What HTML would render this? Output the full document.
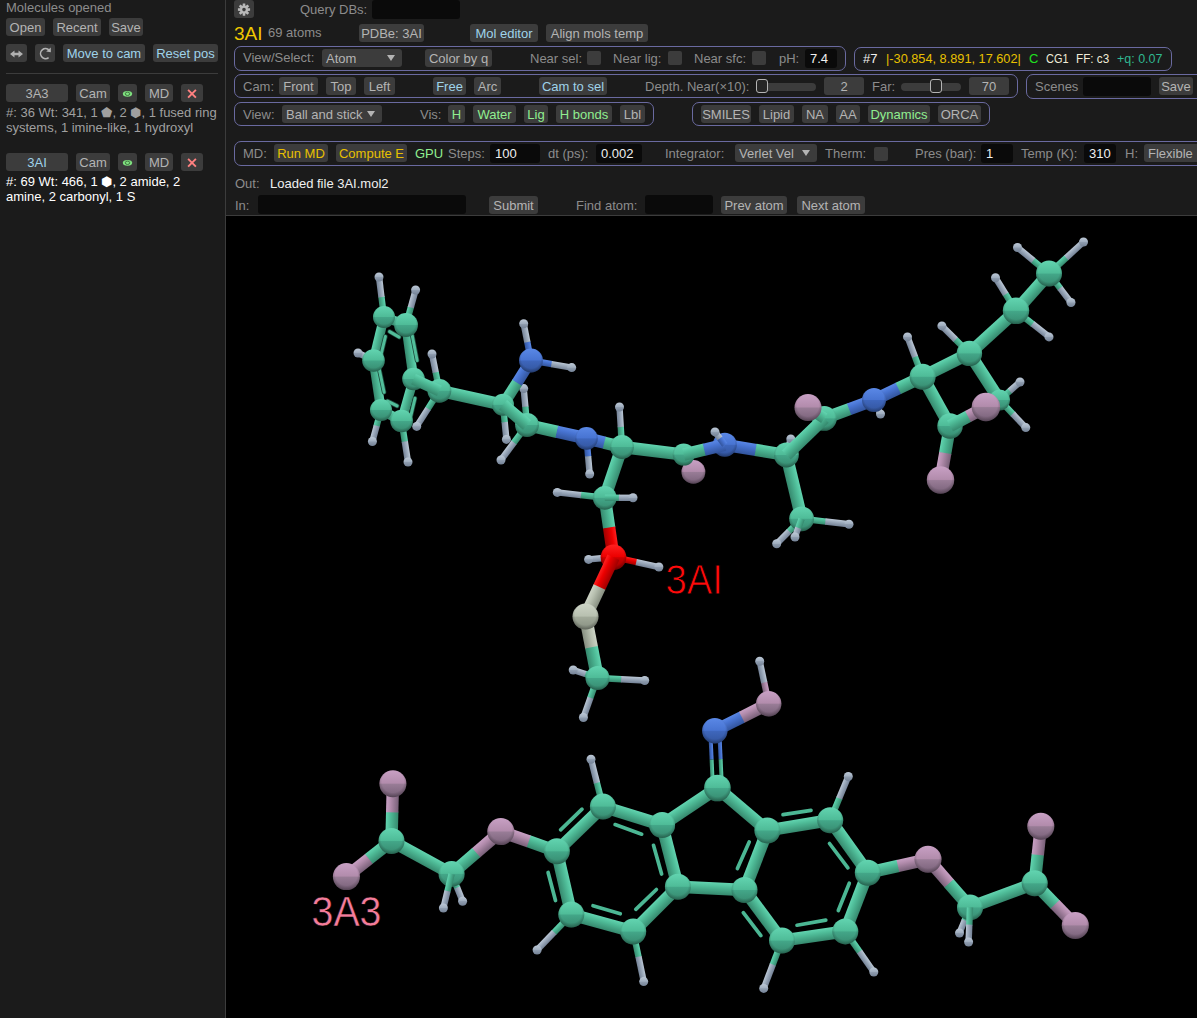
<!DOCTYPE html>
<html><head><meta charset="utf-8">
<style>
*{margin:0;padding:0;box-sizing:border-box}
html,body{width:1197px;height:1018px;overflow:hidden;background:#1b1b1b;font-family:"Liberation Sans",sans-serif;font-size:13px}
.t{position:absolute;white-space:nowrap;line-height:18px;height:18px;color:#8c8c8c;margin-top:1px}
.b{position:absolute;white-space:nowrap;background:#3c3c3c;border-radius:3px;height:18px;line-height:18px;text-align:center;color:#b4b4b4;padding-top:1px}
.inp{position:absolute;background:#0a0a0a;border-radius:3px;height:19px;line-height:19px;color:#f0f0f0;padding-left:5px}
.g{position:absolute;border:1px solid #6a6aa0;border-radius:7px}
.cb{position:absolute;width:14px;height:14px;background:#3c3c3c;border-radius:2px}
.lb{color:#9fd3ea}
.gr{color:#90ee90}
.yl{color:#e8c000}
#view{position:absolute;left:226px;top:216px;width:971px;height:802px;background:#000;overflow:hidden}
#vline{position:absolute;left:225px;top:0;width:1px;height:1018px;background:#3c3c3c}
#hline{position:absolute;left:226px;top:215px;width:971px;height:1px;background:#3c3c3c}
.tri{position:absolute;width:0;height:0;border-left:4.5px solid transparent;border-right:4.5px solid transparent;border-top:6px solid #b4b4b4}
.trk{position:absolute;height:8px;background:#3c3c3c;border-radius:4px}
.hdl{position:absolute;width:12px;height:14px;background:#262626;border:1.5px solid #b4b4b4;border-radius:3px}
</style></head><body>
<!-- LEFT PANEL -->
<div class="t" style="left:6px;top:-2px">Molecules opened</div>
<div class="b" style="left:6px;top:18px;width:39px">Open</div>
<div class="b" style="left:53px;top:18px;width:48px">Recent</div>
<div class="b" style="left:109px;top:18px;width:34px">Save</div>
<div class="b" style="left:6px;top:44px;width:21px"><svg width="21" height="18" style="position:absolute;left:0;top:0"><path d="M4 10 L8.5 6.5 L8.5 8.7 L12.5 8.7 L12.5 6.5 L17 10 L12.5 13.5 L12.5 11.3 L8.5 11.3 L8.5 13.5 Z" fill="#b0b0b0"/></svg></div>
<div class="b" style="left:35px;top:44px;width:20px"><svg width="20" height="18" style="position:absolute;left:0;top:0"><path d="M13.6 13.6 A5 5 0 1 1 14.2 6.2" fill="none" stroke="#b4b4b4" stroke-width="1.6"/><path d="M11.2 7.4 L15.8 3.6 L15.8 8.2 Z" fill="#b4b4b4"/></svg></div>
<div class="b lb" style="left:63px;top:44px;width:82px">Move to cam</div>
<div class="b lb" style="left:153px;top:44px;width:65px">Reset pos</div>
<div style="position:absolute;left:6px;top:73px;width:212px;height:1px;background:#3c3c3c"></div>

<div class="b" style="left:6px;top:84px;width:62px">3A3</div>
<div class="b" style="left:76px;top:84px;width:34px">Cam</div>
<div class="b" style="left:118px;top:84px;width:19px"><svg width="19" height="18" style="position:absolute;left:0;top:0"><ellipse cx="9.5" cy="9.8" rx="4.7" ry="2.9" fill="#7ee07e"/><ellipse cx="9.5" cy="9.8" rx="2.2" ry="1.7" fill="none" stroke="#3c6a3c" stroke-width="0.9"/></svg></div>
<div class="b" style="left:145px;top:84px;width:28px">MD</div>
<div class="b" style="left:181px;top:84px;width:22px"><svg width="22" height="18" style="position:absolute;left:0;top:0"><path d="M7.1 5.9 L14.9 13.7 M14.9 5.9 L7.1 13.7" stroke="#ff8080" stroke-width="1.9"/></svg></div>
<div class="t" style="left:6px;top:103px;color:#a0a0a0">#: 36 Wt: 341, 1 ⬟, 2 ⬢, 1 fused ring</div>
<div class="t" style="left:6px;top:118px;color:#a0a0a0">systems, 1 imine-like, 1 hydroxyl</div>

<div class="b lb" style="left:6px;top:153px;width:62px">3AI</div>
<div class="b" style="left:76px;top:153px;width:34px">Cam</div>
<div class="b" style="left:118px;top:153px;width:19px"><svg width="19" height="18" style="position:absolute;left:0;top:0"><ellipse cx="9.5" cy="9.8" rx="4.7" ry="2.9" fill="#7ee07e"/><ellipse cx="9.5" cy="9.8" rx="2.2" ry="1.7" fill="none" stroke="#3c6a3c" stroke-width="0.9"/></svg></div>
<div class="b" style="left:145px;top:153px;width:28px">MD</div>
<div class="b" style="left:181px;top:153px;width:22px"><svg width="22" height="18" style="position:absolute;left:0;top:0"><path d="M7.1 5.9 L14.9 13.7 M14.9 5.9 L7.1 13.7" stroke="#ff8080" stroke-width="1.9"/></svg></div>
<div class="t" style="left:6px;top:172px;color:#fff">#: 69 Wt: 466, 1 ⬢, 2 amide, 2</div>
<div class="t" style="left:6px;top:187px;color:#fff">amine, 2 carbonyl, 1 S</div>

<div id="vline"></div>
<div id="hline"></div>

<!-- TOP PANEL -->
<div class="b" style="left:234px;top:0;width:20px"><svg width="20" height="18" style="position:absolute;left:0;top:0"><g transform="translate(10 9.6) rotate(-90)"><path d="M6.08 -1.23 L6.08 1.23 L3.74 1.41 L3.64 1.65 L5.17 3.43 L3.43 5.17 L1.65 3.64 L1.41 3.74 L1.23 6.08 L-1.23 6.08 L-1.41 3.74 L-1.65 3.64 L-3.43 5.17 L-5.17 3.43 L-3.64 1.65 L-3.74 1.41 L-6.08 1.23 L-6.08 -1.23 L-3.74 -1.41 L-3.64 -1.65 L-5.17 -3.43 L-3.43 -5.17 L-1.65 -3.64 L-1.41 -3.74 L-1.23 -6.08 L1.23 -6.08 L1.41 -3.74 L1.65 -3.64 L3.43 -5.17 L5.17 -3.43 L3.64 -1.65 L3.74 -1.41Z M1.8 0 A1.8 1.8 0 1 0 -1.8 0 A1.8 1.8 0 1 0 1.8 0Z" fill="#b8b8b8" fill-rule="evenodd"/></g></svg></div>
<div class="t" style="left:300px;top:-0.5px">Query DBs:</div>
<div class="inp" style="left:372px;top:0;width:88px"></div>
<div class="t" style="left:234px;top:24px;font-size:19px;color:#f0c800">3AI</div>
<div class="t" style="left:268px;top:23px">69 atoms</div>
<div class="b" style="left:359px;top:24px;width:65px">PDBe: 3AI</div>
<div class="b lb" style="left:470px;top:24px;width:68px">Mol editor</div>
<div class="b" style="left:546px;top:24px;width:102px">Align mols temp</div>


<!-- ROW 1 -->
<div class="g" style="left:234px;top:46px;width:612px;height:25px"></div>
<div class="t" style="left:243px;top:48px">View/Select:</div>
<div class="b" style="left:322px;top:49px;width:80px;text-align:left;padding-left:4px">Atom<span class="tri" style="left:64.5px;top:6px"></span></div>
<div class="b" style="left:425px;top:49px;width:67px">Color by q</div>
<div class="t" style="left:530px;top:49px">Near sel:</div>
<div class="cb" style="left:587px;top:51px"></div>
<div class="t" style="left:613px;top:49px">Near lig:</div>
<div class="cb" style="left:668px;top:51px"></div>
<div class="t" style="left:694px;top:49px">Near sfc:</div>
<div class="cb" style="left:752px;top:51px"></div>
<div class="t" style="left:779px;top:49px">pH:</div>
<div class="inp" style="left:805px;top:49px;width:32px">7.4</div>

<div class="g" style="left:854px;top:47px;width:318px;height:24px"></div>
<div class="t" style="left:863px;top:49px;color:#f0f0f0">#7</div>
<div class="t yl" style="left:886px;top:49px;transform:scaleX(0.98);transform-origin:0 0">|-30.854, 8.891, 17.602|</div>
<div class="t" style="left:1029px;top:49px;color:#20e020">C</div>
<div class="t" style="left:1045.5px;top:49px;color:#f0ecd8;transform:scaleX(0.84);transform-origin:0 0">CG1</div>
<div class="t" style="left:1076px;top:49px;color:#f0ecd8;transform:scaleX(0.9);transform-origin:0 0">FF: c3</div>
<div class="t" style="left:1116.5px;top:49px;color:#30b890;transform:scaleX(0.96);transform-origin:0 0">+q: 0.07</div>

<!-- ROW 2 -->
<div class="g" style="left:234px;top:74px;width:784px;height:24px"></div>
<div class="t" style="left:243px;top:77px">Cam:</div>
<div class="b" style="left:279px;top:77px;width:39px">Front</div>
<div class="b" style="left:326px;top:77px;width:30px">Top</div>
<div class="b" style="left:364px;top:77px;width:31px">Left</div>
<div class="b lb" style="left:433px;top:77px;width:33px">Free</div>
<div class="b" style="left:474px;top:77px;width:27px">Arc</div>
<div class="b lb" style="left:539px;top:77px;width:68px">Cam to sel</div>
<div class="t" style="left:645px;top:77px">Depth. Near(×10):</div>
<div class="trk" style="left:756px;top:83px;width:60px"></div>
<div class="hdl" style="left:755.5px;top:79px"></div>
<div class="b" style="left:824px;top:77px;width:40px">2</div>
<div class="t" style="left:872px;top:77px">Far:</div>
<div class="trk" style="left:901px;top:83px;width:60px"></div>
<div class="hdl" style="left:929.5px;top:79px"></div>
<div class="b" style="left:969px;top:77px;width:40px">70</div>

<div class="g" style="left:1026px;top:74px;width:200px;height:25px"></div>
<div class="t" style="left:1035px;top:77px">Scenes</div>
<div class="inp" style="left:1083px;top:77px;width:68px"></div>
<div class="b" style="left:1159px;top:77px;width:34px">Save</div>

<!-- ROW 3 -->
<div class="g" style="left:234px;top:102px;width:420px;height:24px"></div>
<div class="t" style="left:243px;top:105px">View:</div>
<div class="b" style="left:282px;top:105px;width:100px;text-align:left;padding-left:4px">Ball and stick<span class="tri" style="left:85px;top:6px"></span></div>
<div class="t" style="left:420px;top:105px">Vis:</div>
<div class="b gr" style="left:448px;top:105px;width:17px">H</div>
<div class="b gr" style="left:473px;top:105px;width:43px">Water</div>
<div class="b gr" style="left:524px;top:105px;width:24px">Lig</div>
<div class="b gr" style="left:556px;top:105px;width:56px">H bonds</div>
<div class="b" style="left:620px;top:105px;width:25px">Lbl</div>

<div class="g" style="left:692px;top:102px;width:298px;height:24px"></div>
<div class="b" style="left:701px;top:105px;width:50px">SMILES</div>
<div class="b" style="left:759px;top:105px;width:35px">Lipid</div>
<div class="b" style="left:802px;top:105px;width:26px">NA</div>
<div class="b" style="left:836px;top:105px;width:24px">AA</div>
<div class="b gr" style="left:868px;top:105px;width:62px">Dynamics</div>
<div class="b" style="left:938px;top:105px;width:43px">ORCA</div>

<!-- MD ROW -->
<div class="g" style="left:234px;top:141px;width:990px;height:25px"></div>
<div class="t" style="left:243px;top:144px">MD:</div>
<div class="b yl" style="left:274px;top:144px;width:54px">Run MD</div>
<div class="b yl" style="left:336px;top:144px;width:71px">Compute E</div>
<div class="t gr" style="left:415px;top:144px">GPU</div>
<div class="t" style="left:448px;top:144px">Steps:</div>
<div class="inp" style="left:490px;top:144px;width:50px">100</div>
<div class="t" style="left:548px;top:144px">dt (ps):</div>
<div class="inp" style="left:596px;top:144px;width:46px">0.002</div>
<div class="t" style="left:665px;top:144px">Integrator:</div>
<div class="b" style="left:735px;top:144px;width:82px;text-align:left;padding-left:4px">Verlet Vel<span class="tri" style="left:66.5px;top:6px"></span></div>
<div class="t" style="left:825px;top:144px">Therm:</div>
<div class="cb" style="left:874px;top:147px"></div>
<div class="t" style="left:915px;top:144px">Pres (bar):</div>
<div class="inp" style="left:981px;top:144px;width:32px">1</div>
<div class="t" style="left:1021px;top:144px">Temp (K):</div>
<div class="inp" style="left:1084px;top:144px;width:32px">310</div>
<div class="t" style="left:1125px;top:144px">H:</div>
<div class="b" style="left:1144px;top:144px;width:60px;text-align:left;padding-left:4px">Flexible</div>

<!-- OUT / IN -->
<div class="t" style="left:235px;top:174px">Out:</div>
<div class="t" style="left:270px;top:174px;color:#f0f0f0">Loaded file 3AI.mol2</div>
<div class="t" style="left:235px;top:196px">In:</div>
<div class="inp" style="left:258px;top:195px;width:208px"></div>
<div class="b" style="left:489px;top:196px;width:49px">Submit</div>
<div class="t" style="left:576px;top:196px">Find atom:</div>
<div class="inp" style="left:645px;top:195px;width:68px"></div>
<div class="b" style="left:721px;top:196px;width:66px">Prev atom</div>
<div class="b" style="left:797px;top:196px;width:68px">Next atom</div>

<div id="view"><svg width="971" height="802" viewBox="0 0 971 802"><defs><linearGradient id="sC" x1="0" y1="0" x2="0" y2="1"><stop offset="0" stop-color="#62d4b0"/><stop offset="0.48" stop-color="#4fbc98"/><stop offset="0.52" stop-color="#43a688"/><stop offset="1" stop-color="#36896e"/></linearGradient><linearGradient id="kC" x1="0" y1="0" x2="0" y2="1"><stop offset="0" stop-color="#62d4b0"/><stop offset="0.35" stop-color="#4fbc98"/><stop offset="1" stop-color="#36896e"/></linearGradient><linearGradient id="sN" x1="0" y1="0" x2="0" y2="1"><stop offset="0" stop-color="#5a88e6"/><stop offset="0.48" stop-color="#4874d2"/><stop offset="0.52" stop-color="#3e66bc"/><stop offset="1" stop-color="#32549c"/></linearGradient><linearGradient id="kN" x1="0" y1="0" x2="0" y2="1"><stop offset="0" stop-color="#5a88e6"/><stop offset="0.35" stop-color="#4874d2"/><stop offset="1" stop-color="#32549c"/></linearGradient><linearGradient id="sP" x1="0" y1="0" x2="0" y2="1"><stop offset="0" stop-color="#c8a0c4"/><stop offset="0.48" stop-color="#b28cac"/><stop offset="0.52" stop-color="#987c96"/><stop offset="1" stop-color="#786078"/></linearGradient><linearGradient id="kP" x1="0" y1="0" x2="0" y2="1"><stop offset="0" stop-color="#c8a0c4"/><stop offset="0.35" stop-color="#b28cac"/><stop offset="1" stop-color="#786078"/></linearGradient><linearGradient id="sR" x1="0" y1="0" x2="0" y2="1"><stop offset="0" stop-color="#ff2020"/><stop offset="0.48" stop-color="#ec0000"/><stop offset="0.52" stop-color="#cc0000"/><stop offset="1" stop-color="#a00000"/></linearGradient><linearGradient id="kR" x1="0" y1="0" x2="0" y2="1"><stop offset="0" stop-color="#ff2020"/><stop offset="0.35" stop-color="#ec0000"/><stop offset="1" stop-color="#a00000"/></linearGradient><linearGradient id="sS" x1="0" y1="0" x2="0" y2="1"><stop offset="0" stop-color="#cdd4c6"/><stop offset="0.48" stop-color="#b8c0b0"/><stop offset="0.52" stop-color="#a2aa9a"/><stop offset="1" stop-color="#868e80"/></linearGradient><linearGradient id="kS" x1="0" y1="0" x2="0" y2="1"><stop offset="0" stop-color="#cdd4c6"/><stop offset="0.35" stop-color="#b8c0b0"/><stop offset="1" stop-color="#868e80"/></linearGradient><linearGradient id="sH" x1="0" y1="0" x2="0" y2="1"><stop offset="0" stop-color="#bcc8d6"/><stop offset="0.48" stop-color="#a0aebf"/><stop offset="0.52" stop-color="#909eb0"/><stop offset="1" stop-color="#748296"/></linearGradient><linearGradient id="kH" x1="0" y1="0" x2="0" y2="1"><stop offset="0" stop-color="#bcc8d6"/><stop offset="0.35" stop-color="#a0aebf"/><stop offset="1" stop-color="#748296"/></linearGradient><radialGradient id="rim" cx="0.5" cy="0.42" r="0.58"><stop offset="0.7" stop-color="#000" stop-opacity="0"/><stop offset="1" stop-color="#000" stop-opacity="0.3"/></radialGradient></defs><rect transform="translate(560.4 239) rotate(-74.7)" x="0" y="-3.2" width="8.9" height="6.4" fill="url(#kC)"/><rect transform="translate(562.6 230.9) rotate(-74.7)" x="0" y="-3.2" width="8.3" height="6.4" fill="url(#kH)"/><circle cx="564.8" cy="222.9" r="4.5" fill="url(#sH)"/><rect transform="translate(139.2 140.5) rotate(25.8)" x="0" y="-3.2" width="9.2" height="6.4" fill="url(#kC)"/><rect transform="translate(132 137) rotate(25.8)" x="0" y="-3.2" width="8.6" height="6.4" fill="url(#kH)"/><rect transform="translate(277 188.8) rotate(84.4)" x="0" y="-3.2" width="18" height="6.4" fill="url(#kC)"/><rect transform="translate(278.7 206.1) rotate(84.4)" x="0" y="-3.2" width="17.4" height="6.4" fill="url(#kH)"/><rect transform="translate(360.5 222.4) rotate(84.9)" x="0" y="-3.2" width="18.5" height="6.4" fill="url(#kN)"/><rect transform="translate(362.1 240.2) rotate(84.9)" x="0" y="-3.2" width="17.9" height="6.4" fill="url(#kH)"/><rect transform="translate(374.5 342.4) rotate(-5)" x="0" y="-3.2" width="13.1" height="6.4" fill="url(#kR)"/><rect transform="translate(362.6 343.4) rotate(-5)" x="0" y="-3.2" width="12.5" height="6.4" fill="url(#kH)"/><rect transform="translate(358.8 457.8) rotate(18.2)" x="0" y="-3.2" width="13.4" height="6.4" fill="url(#kC)"/><rect transform="translate(347.2 454) rotate(18.2)" x="0" y="-3.2" width="12.8" height="6.4" fill="url(#kH)"/><rect transform="translate(648 184) rotate(65.1)" x="0" y="-3.2" width="8.3" height="6.4" fill="url(#kN)"/><rect transform="translate(651.2 191) rotate(65.1)" x="0" y="-3.2" width="7.7" height="6.4" fill="url(#kH)"/><rect transform="translate(562.7 315.7) rotate(-45)" x="0" y="-3.2" width="18.2" height="6.4" fill="url(#kC)"/><rect transform="translate(550.7 327.7) rotate(-45)" x="0" y="-3.2" width="17.6" height="6.4" fill="url(#kH)"/><rect transform="translate(225.6 657.9) rotate(68.1)" x="0" y="-3.2" width="15.3" height="6.4" fill="url(#kC)"/><rect transform="translate(231.1 671.5) rotate(68.1)" x="0" y="-3.2" width="14.7" height="6.4" fill="url(#kH)"/><rect transform="translate(738.5 704.8) rotate(-67.7)" x="0" y="-3.2" width="14.4" height="6.4" fill="url(#kC)"/><rect transform="translate(733.5 717) rotate(-67.7)" x="0" y="-3.2" width="13.8" height="6.4" fill="url(#kH)"/><circle cx="132" cy="137" r="4.5" fill="url(#sH)"/><circle cx="280.4" cy="223.4" r="4.5" fill="url(#sH)"/><circle cx="363.7" cy="258" r="4.5" fill="url(#sH)"/><circle cx="362.6" cy="343.4" r="4.5" fill="url(#sH)"/><circle cx="347.2" cy="454" r="4.5" fill="url(#sH)"/><circle cx="654.5" cy="198" r="4.5" fill="url(#sH)"/><circle cx="550.7" cy="327.7" r="4.5" fill="url(#sH)"/><circle cx="236.6" cy="685.2" r="4.5" fill="url(#sH)"/><circle cx="733.5" cy="717" r="4.5" fill="url(#sH)"/><rect transform="translate(457.7 238.6) rotate(60.7)" x="0" y="-5.6" width="10.5" height="11.3" fill="url(#kC)"/><rect transform="translate(462.6 247.2) rotate(60.7)" x="0" y="-5.6" width="9.9" height="11.3" fill="url(#kP)"/><rect transform="translate(773.6 184) rotate(-41.4)" x="0" y="-3.2" width="14.2" height="6.4" fill="url(#kC)"/><rect transform="translate(783.8 175) rotate(-41.4)" x="0" y="-3.2" width="13.6" height="6.4" fill="url(#kH)"/><rect transform="translate(773.6 184) rotate(46.5)" x="0" y="-3.2" width="19.6" height="6.4" fill="url(#kC)"/><rect transform="translate(786.7 197.8) rotate(46.5)" x="0" y="-3.2" width="19" height="6.4" fill="url(#kH)"/><circle cx="467.4" cy="255.9" r="11.9" fill="url(#sP)"/><circle cx="467.4" cy="255.9" r="11.9" fill="url(#rim)"/><circle cx="794" cy="166" r="4.5" fill="url(#sH)"/><circle cx="799.8" cy="211.6" r="4.5" fill="url(#sH)"/><rect transform="translate(155.4 80.4) rotate(82.9)" x="0" y="-3.2" width="20.8" height="6.4" fill="url(#kC)"/><rect transform="translate(153 61) rotate(82.9)" x="0" y="-3.2" width="20.2" height="6.4" fill="url(#kH)"/><rect transform="translate(180 109) rotate(-74.7)" x="0" y="-3.2" width="18.7" height="6.4" fill="url(#kC)"/><rect transform="translate(184.8 91.5) rotate(-74.7)" x="0" y="-3.2" width="18.1" height="6.4" fill="url(#kH)"/><rect transform="translate(150.5 210.3) rotate(-74.7)" x="0" y="-3.2" width="16.9" height="6.4" fill="url(#kC)"/><rect transform="translate(146.4 225.5) rotate(-74.7)" x="0" y="-3.2" width="16.3" height="6.4" fill="url(#kH)"/><rect transform="translate(175.6 205) rotate(81.1)" x="0" y="-3.2" width="21.3" height="6.4" fill="url(#kC)"/><rect transform="translate(178.8 225.5) rotate(81.1)" x="0" y="-3.2" width="20.7" height="6.4" fill="url(#kH)"/><rect transform="translate(209.6 155.8) rotate(78.6)" x="0" y="-3.2" width="19.4" height="6.4" fill="url(#kC)"/><rect transform="translate(206 138) rotate(78.6)" x="0" y="-3.2" width="18.8" height="6.4" fill="url(#kH)"/><rect transform="translate(201.7 193.1) rotate(-57.5)" x="0" y="-3.2" width="21.7" height="6.4" fill="url(#kC)"/><rect transform="translate(190.7 210.4) rotate(-57.5)" x="0" y="-3.2" width="21.1" height="6.4" fill="url(#kH)"/><rect transform="translate(301.2 125.6) rotate(78.8)" x="0" y="-3.2" width="19.3" height="6.4" fill="url(#kN)"/><rect transform="translate(297.7 107.8) rotate(78.8)" x="0" y="-3.2" width="18.7" height="6.4" fill="url(#kH)"/><rect transform="translate(305 144.5) rotate(9.9)" x="0" y="-3.2" width="21.3" height="6.4" fill="url(#kN)"/><rect transform="translate(325.4 148.1) rotate(9.9)" x="0" y="-3.2" width="20.7" height="6.4" fill="url(#kH)"/><rect transform="translate(299.3 190.2) rotate(84.8)" x="0" y="-3.2" width="18.9" height="6.4" fill="url(#kC)"/><rect transform="translate(297.7 172.6) rotate(84.8)" x="0" y="-3.2" width="18.3" height="6.4" fill="url(#kH)"/><rect transform="translate(287.6 227) rotate(-53.4)" x="0" y="-3.2" width="22.4" height="6.4" fill="url(#kC)"/><rect transform="translate(275 244) rotate(-53.4)" x="0" y="-3.2" width="21.8" height="6.4" fill="url(#kH)"/><rect transform="translate(394.7 210.4) rotate(86.4)" x="0" y="-3.2" width="20.6" height="6.4" fill="url(#kC)"/><rect transform="translate(393.5 191) rotate(86.4)" x="0" y="-3.2" width="20" height="6.4" fill="url(#kH)"/><rect transform="translate(354.5 279) rotate(6.5)" x="0" y="-3.2" width="24.5" height="6.4" fill="url(#kC)"/><rect transform="translate(331.3 276.4) rotate(6.5)" x="0" y="-3.2" width="23.9" height="6.4" fill="url(#kH)"/><rect transform="translate(387.5 341.2) rotate(12.2)" x="0" y="-3.2" width="23.8" height="6.4" fill="url(#kR)"/><rect transform="translate(410.2 346.1) rotate(12.2)" x="0" y="-3.2" width="23.2" height="6.4" fill="url(#kH)"/><rect transform="translate(371.5 462) rotate(3)" x="0" y="-3.2" width="24.2" height="6.4" fill="url(#kC)"/><rect transform="translate(395.1 463.2) rotate(3)" x="0" y="-3.2" width="23.6" height="6.4" fill="url(#kH)"/><rect transform="translate(364.2 482.3) rotate(-70.4)" x="0" y="-3.2" width="21.6" height="6.4" fill="url(#kC)"/><rect transform="translate(357.4 501.5) rotate(-70.4)" x="0" y="-3.2" width="21" height="6.4" fill="url(#kH)"/><rect transform="translate(688.8 140.3) rotate(69.3)" x="0" y="-3.2" width="21.9" height="6.4" fill="url(#kC)"/><rect transform="translate(681.5 120.9) rotate(69.3)" x="0" y="-3.2" width="21.3" height="6.4" fill="url(#kH)"/><rect transform="translate(729.2 123.2) rotate(45)" x="0" y="-3.2" width="20" height="6.4" fill="url(#kC)"/><rect transform="translate(715.9 109.9) rotate(45)" x="0" y="-3.2" width="19.4" height="6.4" fill="url(#kH)"/><rect transform="translate(743.4 137.4) rotate(57.1)" x="0" y="-6.2" width="55.5" height="12.4" fill="url(#kC)"/><rect transform="translate(779.4 77.8) rotate(58.2)" x="0" y="-3.2" width="20" height="6.4" fill="url(#kC)"/><rect transform="translate(769.5 61.8) rotate(58.2)" x="0" y="-3.2" width="19.4" height="6.4" fill="url(#kH)"/><rect transform="translate(790 94.8) rotate(38.3)" x="0" y="-3.2" width="21.6" height="6.4" fill="url(#kC)"/><rect transform="translate(806.5 107.8) rotate(38.3)" x="0" y="-3.2" width="21" height="6.4" fill="url(#kH)"/><rect transform="translate(806.8 44.2) rotate(39.6)" x="0" y="-3.2" width="21.1" height="6.4" fill="url(#kC)"/><rect transform="translate(791.5 31.5) rotate(39.6)" x="0" y="-3.2" width="20.5" height="6.4" fill="url(#kH)"/><rect transform="translate(823 57.6) rotate(-42.5)" x="0" y="-3.2" width="24" height="6.4" fill="url(#kC)"/><rect transform="translate(840.2 41.8) rotate(-42.5)" x="0" y="-3.2" width="23.4" height="6.4" fill="url(#kH)"/><rect transform="translate(823 57.6) rotate(52.7)" x="0" y="-3.2" width="18.8" height="6.4" fill="url(#kC)"/><rect transform="translate(834 72.1) rotate(52.7)" x="0" y="-3.2" width="18.2" height="6.4" fill="url(#kH)"/><rect transform="translate(575.6 302.8) rotate(6.6)" x="0" y="-3.2" width="24.5" height="6.4" fill="url(#kC)"/><rect transform="translate(599.3 305.5) rotate(6.6)" x="0" y="-3.2" width="23.9" height="6.4" fill="url(#kH)"/><rect transform="translate(538.1 465.9) rotate(78)" x="0" y="-3.2" width="22.3" height="6.4" fill="url(#kP)"/><rect transform="translate(533.7 445.3) rotate(78)" x="0" y="-3.2" width="21.7" height="6.4" fill="url(#kH)"/><rect transform="translate(370.8 566.3) rotate(75.9)" x="0" y="-3.2" width="25" height="6.4" fill="url(#kC)"/><rect transform="translate(365 543.2) rotate(75.9)" x="0" y="-3.2" width="24.4" height="6.4" fill="url(#kH)"/><rect transform="translate(327.8 716.7) rotate(-46.1)" x="0" y="-3.2" width="25.2" height="6.4" fill="url(#kC)"/><rect transform="translate(311.1 734) rotate(-46.1)" x="0" y="-3.2" width="24.6" height="6.4" fill="url(#kH)"/><rect transform="translate(407.2 715.6) rotate(78.1)" x="0" y="-3.2" width="26.1" height="6.4" fill="url(#kC)"/><rect transform="translate(412.5 740.6) rotate(78.1)" x="0" y="-3.2" width="25.5" height="6.4" fill="url(#kH)"/><rect transform="translate(546.6 749.1) rotate(-69.1)" x="0" y="-3.2" width="26.2" height="6.4" fill="url(#kC)"/><rect transform="translate(537.7 772.4) rotate(-69.1)" x="0" y="-3.2" width="25.6" height="6.4" fill="url(#kH)"/><rect transform="translate(619.3 715.4) rotate(54.9)" x="0" y="-3.2" width="25.4" height="6.4" fill="url(#kC)"/><rect transform="translate(633.5 735.7) rotate(54.9)" x="0" y="-3.2" width="24.8" height="6.4" fill="url(#kH)"/><rect transform="translate(604.2 604.2) rotate(-67.5)" x="0" y="-3.2" width="24.3" height="6.4" fill="url(#kC)"/><rect transform="translate(613.2 582.4) rotate(-67.5)" x="0" y="-3.2" width="23.7" height="6.4" fill="url(#kH)"/><circle cx="153" cy="61" r="4.5" fill="url(#sH)"/><circle cx="189.6" cy="74" r="4.5" fill="url(#sH)"/><circle cx="146.4" cy="225.5" r="4.5" fill="url(#sH)"/><circle cx="182" cy="246" r="4.5" fill="url(#sH)"/><circle cx="206" cy="138" r="4.5" fill="url(#sH)"/><circle cx="190.7" cy="210.4" r="4.5" fill="url(#sH)"/><circle cx="297.7" cy="107.8" r="4.5" fill="url(#sH)"/><circle cx="345.7" cy="151.6" r="4.5" fill="url(#sH)"/><circle cx="297.7" cy="172.6" r="4.5" fill="url(#sH)"/><circle cx="275" cy="244" r="4.5" fill="url(#sH)"/><circle cx="393.5" cy="191" r="4.5" fill="url(#sH)"/><circle cx="331.3" cy="276.4" r="4.5" fill="url(#sH)"/><circle cx="432.9" cy="351" r="4.5" fill="url(#sH)"/><circle cx="418.7" cy="464.5" r="4.5" fill="url(#sH)"/><circle cx="357.4" cy="501.5" r="4.5" fill="url(#sH)"/><circle cx="681.5" cy="120.9" r="4.5" fill="url(#sH)"/><circle cx="715.9" cy="109.9" r="4.5" fill="url(#sH)"/><circle cx="773.6" cy="184" r="10.5" fill="url(#sC)"/><circle cx="773.6" cy="184" r="10.5" fill="url(#rim)"/><circle cx="769.5" cy="61.8" r="4.5" fill="url(#sH)"/><circle cx="823" cy="120.9" r="4.5" fill="url(#sH)"/><circle cx="791.5" cy="31.5" r="4.5" fill="url(#sH)"/><circle cx="857.5" cy="26" r="4.5" fill="url(#sH)"/><circle cx="845" cy="86.5" r="4.5" fill="url(#sH)"/><circle cx="623" cy="308.3" r="4.5" fill="url(#sH)"/><circle cx="533.7" cy="445.3" r="4.5" fill="url(#sH)"/><circle cx="365" cy="543.2" r="4.5" fill="url(#sH)"/><circle cx="311.1" cy="734" r="4.5" fill="url(#sH)"/><circle cx="417.7" cy="765.6" r="4.5" fill="url(#sH)"/><circle cx="537.7" cy="772.4" r="4.5" fill="url(#sH)"/><circle cx="647.8" cy="756" r="4.5" fill="url(#sH)"/><circle cx="622.3" cy="560.5" r="4.5" fill="url(#sH)"/><rect transform="translate(158 101) rotate(20)" x="0" y="-4.8" width="23.4" height="9.6" fill="url(#kC)"/><rect transform="translate(147.5 144.5) rotate(-76.4)" x="0" y="-4.8" width="44.7" height="9.6" fill="url(#kC)"/><rect transform="translate(180 109) rotate(82.1)" x="0" y="-4.8" width="54.5" height="9.6" fill="url(#kC)"/><rect transform="translate(147.5 144.5) rotate(81.4)" x="0" y="-4.8" width="50.1" height="9.6" fill="url(#kC)"/><rect transform="translate(175.6 205) rotate(-74.2)" x="0" y="-4.8" width="43.7" height="9.6" fill="url(#kC)"/><rect transform="translate(155 194) rotate(28.1)" x="0" y="-4.8" width="23.4" height="9.6" fill="url(#kC)"/><rect transform="translate(213.4 174.8) rotate(12.4)" x="0" y="-6.2" width="65.1" height="12.4" fill="url(#kC)"/><rect transform="translate(277 188.8) rotate(-57.7)" x="0" y="-5.6" width="26.8" height="11.3" fill="url(#kC)"/><rect transform="translate(291 166.7) rotate(-57.7)" x="0" y="-5.6" width="26.2" height="11.3" fill="url(#kN)"/><rect transform="translate(301 209) rotate(12.7)" x="0" y="-6.2" width="31.1" height="12.4" fill="url(#kC)"/><rect transform="translate(330.8 215.7) rotate(12.7)" x="0" y="-6.2" width="30.5" height="12.4" fill="url(#kN)"/><rect transform="translate(360.5 222.4) rotate(13.6)" x="0" y="-6.2" width="18.9" height="12.4" fill="url(#kN)"/><rect transform="translate(378.2 226.7) rotate(13.6)" x="0" y="-6.2" width="18.3" height="12.4" fill="url(#kC)"/><rect transform="translate(396 231) rotate(7)" x="0" y="-6.2" width="62.2" height="12.4" fill="url(#kC)"/><rect transform="translate(378.8 281.8) rotate(-71.3)" x="0" y="-6.2" width="53.6" height="12.4" fill="url(#kC)"/><rect transform="translate(378.8 281.8) rotate(81.7)" x="0" y="-6.2" width="30.6" height="12.4" fill="url(#kC)"/><rect transform="translate(383.1 311.5) rotate(81.7)" x="0" y="-6.2" width="30" height="12.4" fill="url(#kR)"/><rect transform="translate(359.5 400.6) rotate(78.9)" x="0" y="-6.5" width="31.9" height="13" fill="url(#kS)"/><rect transform="translate(365.5 431.3) rotate(78.9)" x="0" y="-6.5" width="31.3" height="13" fill="url(#kC)"/><rect transform="translate(498.8 228.8) rotate(9.4)" x="0" y="-6.2" width="31.8" height="12.4" fill="url(#kN)"/><rect transform="translate(529.6 233.9) rotate(9.4)" x="0" y="-6.2" width="31.2" height="12.4" fill="url(#kC)"/><rect transform="translate(598.3 202.4) rotate(-20.3)" x="0" y="-6.2" width="27.1" height="12.4" fill="url(#kC)"/><rect transform="translate(623.1 193.2) rotate(-20.3)" x="0" y="-6.2" width="26.5" height="12.4" fill="url(#kN)"/><rect transform="translate(648 184) rotate(-25.5)" x="0" y="-6.2" width="27.5" height="12.4" fill="url(#kN)"/><rect transform="translate(672.3 172.4) rotate(-25.5)" x="0" y="-6.2" width="26.9" height="12.4" fill="url(#kC)"/><rect transform="translate(696.6 160.8) rotate(-26.6)" x="0" y="-6.2" width="52.3" height="12.4" fill="url(#kC)"/><rect transform="translate(696.6 160.8) rotate(60.9)" x="0" y="-6.2" width="56.3" height="12.4" fill="url(#kC)"/><rect transform="translate(719.1 237.6) rotate(-80)" x="0" y="-6.2" width="28" height="12.4" fill="url(#kC)"/><rect transform="translate(714.5 264) rotate(-80)" x="0" y="-6.2" width="27.4" height="12.4" fill="url(#kP)"/><rect transform="translate(743.4 137.4) rotate(-42.4)" x="0" y="-6.2" width="63.1" height="12.4" fill="url(#kC)"/><rect transform="translate(790 94.8) rotate(-48.4)" x="0" y="-6.2" width="49.7" height="12.4" fill="url(#kC)"/><rect transform="translate(560.4 239) rotate(76.6)" x="0" y="-6.2" width="65.6" height="12.4" fill="url(#kC)"/><rect transform="translate(488.8 514.8) rotate(-26.7)" x="0" y="-6.2" width="30.8" height="12.4" fill="url(#kN)"/><rect transform="translate(515.8 501.2) rotate(-26.7)" x="0" y="-6.2" width="30.2" height="12.4" fill="url(#kP)"/><rect transform="translate(493.3 514.6) rotate(87.4)" x="0" y="-2" width="28.6" height="4" fill="url(#kN)"/><rect transform="translate(494.6 543.2) rotate(87.4)" x="0" y="-2" width="28.6" height="4" fill="url(#kC)"/><rect transform="translate(484.3 515) rotate(87.4)" x="0" y="-2" width="28.6" height="4" fill="url(#kN)"/><rect transform="translate(485.6 543.6) rotate(87.4)" x="0" y="-2" width="28.6" height="4" fill="url(#kC)"/><rect transform="translate(436.1 609) rotate(-33.8)" x="0" y="-6.2" width="66.5" height="12.4" fill="url(#kC)"/><rect transform="translate(376.9 590.6) rotate(17.3)" x="0" y="-6.2" width="62" height="12.4" fill="url(#kC)"/><rect transform="translate(330.8 635.3) rotate(-44.1)" x="0" y="-6.2" width="64.2" height="12.4" fill="url(#kC)"/><rect transform="translate(330.8 635.3) rotate(77.1)" x="0" y="-6.2" width="64.8" height="12.4" fill="url(#kC)"/><rect transform="translate(345.3 698.5) rotate(15.4)" x="0" y="-6.2" width="64.2" height="12.4" fill="url(#kC)"/><rect transform="translate(407.2 715.6) rotate(-45.1)" x="0" y="-6.2" width="63.3" height="12.4" fill="url(#kC)"/><rect transform="translate(436.1 609) rotate(75.7)" x="0" y="-6.2" width="63.8" height="12.4" fill="url(#kC)"/><rect transform="translate(491.4 572) rotate(40.4)" x="0" y="-6.2" width="65.6" height="12.4" fill="url(#kC)"/><rect transform="translate(518.5 674) rotate(-68.9)" x="0" y="-6.2" width="63.8" height="12.4" fill="url(#kC)"/><rect transform="translate(451.9 670.8) rotate(2.8)" x="0" y="-6.2" width="66.7" height="12.4" fill="url(#kC)"/><rect transform="translate(518.5 674) rotate(53.5)" x="0" y="-6.2" width="63" height="12.4" fill="url(#kC)"/><rect transform="translate(556 724.6) rotate(-8.3)" x="0" y="-6.2" width="64" height="12.4" fill="url(#kC)"/><rect transform="translate(619.3 715.4) rotate(-69)" x="0" y="-6.2" width="62.8" height="12.4" fill="url(#kC)"/><rect transform="translate(604.2 604.2) rotate(54.4)" x="0" y="-6.2" width="64.7" height="12.4" fill="url(#kC)"/><rect transform="translate(541.4 614.5) rotate(-9.3)" x="0" y="-6.2" width="63.6" height="12.4" fill="url(#kC)"/><rect transform="translate(302.2 625.2) rotate(19.5)" x="0" y="-6.2" width="30.3" height="12.4" fill="url(#kC)"/><rect transform="translate(274.8 615.5) rotate(19.5)" x="0" y="-6.2" width="29.7" height="12.4" fill="url(#kP)"/><rect transform="translate(249.7 637.1) rotate(-40.8)" x="0" y="-6.2" width="33.1" height="12.4" fill="url(#kP)"/><rect transform="translate(225.6 657.9) rotate(-40.8)" x="0" y="-6.2" width="32.5" height="12.4" fill="url(#kC)"/><rect transform="translate(165.5 625) rotate(28.7)" x="0" y="-6.2" width="68.5" height="12.4" fill="url(#kC)"/><rect transform="translate(165.5 625) rotate(-88.6)" x="0" y="-6.2" width="29.3" height="12.4" fill="url(#kC)"/><rect transform="translate(166.2 596.4) rotate(-88.6)" x="0" y="-6.2" width="28.7" height="12.4" fill="url(#kP)"/><rect transform="translate(142.5 643.2) rotate(-38.3)" x="0" y="-6.2" width="29.3" height="12.4" fill="url(#kC)"/><rect transform="translate(120.4 660.6) rotate(-38.3)" x="0" y="-6.2" width="28.7" height="12.4" fill="url(#kP)"/><rect transform="translate(641.8 656.8) rotate(-12.7)" x="0" y="-6.2" width="31.5" height="12.4" fill="url(#kC)"/><rect transform="translate(671.9 650) rotate(-12.7)" x="0" y="-6.2" width="30.9" height="12.4" fill="url(#kP)"/><rect transform="translate(702 643.2) rotate(48.9)" x="0" y="-6.2" width="32.6" height="12.4" fill="url(#kP)"/><rect transform="translate(723 667.3) rotate(48.9)" x="0" y="-6.2" width="32" height="12.4" fill="url(#kC)"/><rect transform="translate(744 691.4) rotate(-20.4)" x="0" y="-6.2" width="69" height="12.4" fill="url(#kC)"/><rect transform="translate(808.7 667.3) rotate(-83.9)" x="0" y="-6.2" width="29.3" height="12.4" fill="url(#kC)"/><rect transform="translate(811.8 638.8) rotate(-83.9)" x="0" y="-6.2" width="28.7" height="12.4" fill="url(#kP)"/><rect transform="translate(808.7 667.3) rotate(46)" x="0" y="-6.2" width="29.8" height="12.4" fill="url(#kC)"/><rect transform="translate(829 688.3) rotate(46)" x="0" y="-6.2" width="29.2" height="12.4" fill="url(#kP)"/><line x1="334.6" y1="613.8" x2="356" y2="593.2" stroke="#4cb794" stroke-width="3.7" stroke-linecap="round"/><line x1="322.1" y1="656.5" x2="329.5" y2="684.5" stroke="#4cb794" stroke-width="3.7" stroke-linecap="round"/><line x1="367" y1="689.7" x2="394.3" y2="697.8" stroke="#4cb794" stroke-width="3.7" stroke-linecap="round"/><line x1="409.8" y1="693.3" x2="430.4" y2="673.5" stroke="#4cb794" stroke-width="3.7" stroke-linecap="round"/><line x1="427.5" y1="629.3" x2="435.6" y2="658" stroke="#4cb794" stroke-width="3.7" stroke-linecap="round"/><line x1="389.1" y1="608.6" x2="415.7" y2="618.2" stroke="#4cb794" stroke-width="3.7" stroke-linecap="round"/><line x1="557" y1="598.7" x2="585" y2="594.3" stroke="#4cb794" stroke-width="3.7" stroke-linecap="round"/><line x1="603.5" y1="627.5" x2="621.9" y2="651.8" stroke="#4cb794" stroke-width="3.7" stroke-linecap="round"/><line x1="623.3" y1="667.2" x2="612.3" y2="694.5" stroke="#4cb794" stroke-width="3.7" stroke-linecap="round"/><line x1="571" y1="709.2" x2="599.8" y2="704.1" stroke="#4cb794" stroke-width="3.7" stroke-linecap="round"/><line x1="517.3" y1="696.7" x2="534.9" y2="719.6" stroke="#4cb794" stroke-width="3.7" stroke-linecap="round"/><line x1="511.4" y1="652.5" x2="523.2" y2="626" stroke="#4cb794" stroke-width="3.7" stroke-linecap="round"/><line x1="159.4" y1="120.5" x2="154.6" y2="140.4" stroke="#1e4a3c" stroke-width="4.6" stroke-linecap="round"/><line x1="159.4" y1="120.5" x2="154.6" y2="140.4" stroke="#52be9a" stroke-width="3" stroke-linecap="round"/><line x1="186.3" y1="119.8" x2="191.1" y2="144.5" stroke="#1e4a3c" stroke-width="4.6" stroke-linecap="round"/><line x1="186.3" y1="119.8" x2="191.1" y2="144.5" stroke="#52be9a" stroke-width="3" stroke-linecap="round"/><line x1="153.3" y1="153.5" x2="158.1" y2="176.2" stroke="#1e4a3c" stroke-width="4.6" stroke-linecap="round"/><line x1="153.3" y1="153.5" x2="158.1" y2="176.2" stroke="#52be9a" stroke-width="3" stroke-linecap="round"/><line x1="189" y1="182.3" x2="184.2" y2="202.3" stroke="#1e4a3c" stroke-width="4.6" stroke-linecap="round"/><line x1="189" y1="182.3" x2="184.2" y2="202.3" stroke="#52be9a" stroke-width="3" stroke-linecap="round"/><line x1="161.5" y1="185.1" x2="171.1" y2="189.9" stroke="#1e4a3c" stroke-width="4.6" stroke-linecap="round"/><line x1="161.5" y1="185.1" x2="171.1" y2="189.9" stroke="#52be9a" stroke-width="3" stroke-linecap="round"/><line x1="163.6" y1="115.6" x2="173.2" y2="121.1" stroke="#1e4a3c" stroke-width="4.6" stroke-linecap="round"/><line x1="163.6" y1="115.6" x2="173.2" y2="121.1" stroke="#52be9a" stroke-width="3" stroke-linecap="round"/><circle cx="158" cy="101" r="11" fill="url(#sC)"/><circle cx="158" cy="101" r="11" fill="url(#rim)"/><circle cx="180" cy="109" r="11.9" fill="url(#sC)"/><circle cx="180" cy="109" r="11.9" fill="url(#rim)"/><circle cx="147.5" cy="144.5" r="11.3" fill="url(#sC)"/><circle cx="147.5" cy="144.5" r="11.3" fill="url(#rim)"/><circle cx="187.5" cy="163" r="11.3" fill="url(#sC)"/><circle cx="187.5" cy="163" r="11.3" fill="url(#rim)"/><circle cx="155" cy="194" r="11" fill="url(#sC)"/><circle cx="155" cy="194" r="11" fill="url(#rim)"/><circle cx="175.6" cy="205" r="11.3" fill="url(#sC)"/><circle cx="175.6" cy="205" r="11.3" fill="url(#rim)"/><circle cx="213.4" cy="174.8" r="11.9" fill="url(#sC)"/><circle cx="213.4" cy="174.8" r="11.9" fill="url(#rim)"/><circle cx="277" cy="188.8" r="11" fill="url(#sC)"/><circle cx="277" cy="188.8" r="11" fill="url(#rim)"/><circle cx="305" cy="144.5" r="11.9" fill="url(#sN)"/><circle cx="305" cy="144.5" r="11.9" fill="url(#rim)"/><circle cx="301" cy="209" r="11.9" fill="url(#sC)"/><circle cx="301" cy="209" r="11.9" fill="url(#rim)"/><circle cx="360.5" cy="222.4" r="11.3" fill="url(#sN)"/><circle cx="360.5" cy="222.4" r="11.3" fill="url(#rim)"/><circle cx="396" cy="231" r="11.9" fill="url(#sC)"/><circle cx="396" cy="231" r="11.9" fill="url(#rim)"/><circle cx="457.7" cy="238.6" r="11" fill="url(#sC)"/><circle cx="457.7" cy="238.6" r="11" fill="url(#rim)"/><circle cx="498.8" cy="228.8" r="12" fill="url(#sN)"/><circle cx="498.8" cy="228.8" r="12" fill="url(#rim)"/><circle cx="378.8" cy="281.8" r="11.9" fill="url(#sC)"/><circle cx="378.8" cy="281.8" r="11.9" fill="url(#rim)"/><circle cx="387.5" cy="341.2" r="12.8" fill="url(#sR)"/><circle cx="387.5" cy="341.2" r="12.8" fill="url(#rim)"/><circle cx="371.5" cy="462" r="12" fill="url(#sC)"/><circle cx="371.5" cy="462" r="12" fill="url(#rim)"/><circle cx="560.4" cy="239" r="12.4" fill="url(#sC)"/><circle cx="560.4" cy="239" r="12.4" fill="url(#rim)"/><circle cx="598.3" cy="202.4" r="12.4" fill="url(#sC)"/><circle cx="598.3" cy="202.4" r="12.4" fill="url(#rim)"/><circle cx="648" cy="184" r="12" fill="url(#sN)"/><circle cx="648" cy="184" r="12" fill="url(#rim)"/><circle cx="696.6" cy="160.8" r="13" fill="url(#sC)"/><circle cx="696.6" cy="160.8" r="13" fill="url(#rim)"/><circle cx="743.4" cy="137.4" r="12.7" fill="url(#sC)"/><circle cx="743.4" cy="137.4" r="12.7" fill="url(#rim)"/><circle cx="724" cy="210" r="12.7" fill="url(#sC)"/><circle cx="724" cy="210" r="12.7" fill="url(#rim)"/><circle cx="714.5" cy="264" r="13.7" fill="url(#sP)"/><circle cx="714.5" cy="264" r="13.7" fill="url(#rim)"/><circle cx="790" cy="94.8" r="13.2" fill="url(#sC)"/><circle cx="790" cy="94.8" r="13.2" fill="url(#rim)"/><circle cx="823" cy="57.6" r="13" fill="url(#sC)"/><circle cx="823" cy="57.6" r="13" fill="url(#rim)"/><circle cx="575.6" cy="302.8" r="12.4" fill="url(#sC)"/><circle cx="575.6" cy="302.8" r="12.4" fill="url(#rim)"/><circle cx="488.8" cy="514.8" r="12.7" fill="url(#sN)"/><circle cx="488.8" cy="514.8" r="12.7" fill="url(#rim)"/><circle cx="542.7" cy="487.7" r="12.7" fill="url(#sP)"/><circle cx="542.7" cy="487.7" r="12.7" fill="url(#rim)"/><circle cx="491.4" cy="572" r="13.3" fill="url(#sC)"/><circle cx="491.4" cy="572" r="13.3" fill="url(#rim)"/><circle cx="436.1" cy="609" r="13" fill="url(#sC)"/><circle cx="436.1" cy="609" r="13" fill="url(#rim)"/><circle cx="376.9" cy="590.6" r="13" fill="url(#sC)"/><circle cx="376.9" cy="590.6" r="13" fill="url(#rim)"/><circle cx="330.8" cy="635.3" r="13" fill="url(#sC)"/><circle cx="330.8" cy="635.3" r="13" fill="url(#rim)"/><circle cx="345.3" cy="698.5" r="13" fill="url(#sC)"/><circle cx="345.3" cy="698.5" r="13" fill="url(#rim)"/><circle cx="407.2" cy="715.6" r="13" fill="url(#sC)"/><circle cx="407.2" cy="715.6" r="13" fill="url(#rim)"/><circle cx="451.9" cy="670.8" r="13" fill="url(#sC)"/><circle cx="451.9" cy="670.8" r="13" fill="url(#rim)"/><circle cx="541.4" cy="614.5" r="13" fill="url(#sC)"/><circle cx="541.4" cy="614.5" r="13" fill="url(#rim)"/><circle cx="518.5" cy="674" r="13" fill="url(#sC)"/><circle cx="518.5" cy="674" r="13" fill="url(#rim)"/><circle cx="556" cy="724.6" r="13" fill="url(#sC)"/><circle cx="556" cy="724.6" r="13" fill="url(#rim)"/><circle cx="619.3" cy="715.4" r="13" fill="url(#sC)"/><circle cx="619.3" cy="715.4" r="13" fill="url(#rim)"/><circle cx="641.8" cy="656.8" r="13" fill="url(#sC)"/><circle cx="641.8" cy="656.8" r="13" fill="url(#rim)"/><circle cx="604.2" cy="604.2" r="13" fill="url(#sC)"/><circle cx="604.2" cy="604.2" r="13" fill="url(#rim)"/><circle cx="274.8" cy="615.5" r="13.5" fill="url(#sP)"/><circle cx="274.8" cy="615.5" r="13.5" fill="url(#rim)"/><circle cx="225.6" cy="657.9" r="13" fill="url(#sC)"/><circle cx="225.6" cy="657.9" r="13" fill="url(#rim)"/><circle cx="165.5" cy="625" r="13" fill="url(#sC)"/><circle cx="165.5" cy="625" r="13" fill="url(#rim)"/><circle cx="166.9" cy="567.7" r="13.5" fill="url(#sP)"/><circle cx="166.9" cy="567.7" r="13.5" fill="url(#rim)"/><circle cx="120.4" cy="660.6" r="13.5" fill="url(#sP)"/><circle cx="120.4" cy="660.6" r="13.5" fill="url(#rim)"/><circle cx="702" cy="643.2" r="13.5" fill="url(#sP)"/><circle cx="702" cy="643.2" r="13.5" fill="url(#rim)"/><circle cx="744" cy="691.4" r="13" fill="url(#sC)"/><circle cx="744" cy="691.4" r="13" fill="url(#rim)"/><circle cx="808.7" cy="667.3" r="13" fill="url(#sC)"/><circle cx="808.7" cy="667.3" r="13" fill="url(#rim)"/><circle cx="814.8" cy="610.2" r="13.5" fill="url(#sP)"/><circle cx="814.8" cy="610.2" r="13.5" fill="url(#rim)"/><circle cx="849.3" cy="709.4" r="13.5" fill="url(#sP)"/><circle cx="849.3" cy="709.4" r="13.5" fill="url(#rim)"/><rect transform="translate(187.5 163) rotate(24.5)" x="0" y="-5.6" width="28.5" height="11.3" fill="url(#kC)"/><rect transform="translate(277 188.8) rotate(40.1)" x="0" y="-6.2" width="31.4" height="12.4" fill="url(#kC)"/><rect transform="translate(457.7 238.6) rotate(-13.4)" x="0" y="-6.2" width="21.7" height="12.4" fill="url(#kC)"/><rect transform="translate(478.2 233.7) rotate(-13.4)" x="0" y="-6.2" width="21.1" height="12.4" fill="url(#kN)"/><rect transform="translate(493.5 221.9) rotate(52.8)" x="0" y="-3.2" width="8.7" height="6.4" fill="url(#kN)"/><rect transform="translate(489 215.9) rotate(52.8)" x="0" y="-3.2" width="8.1" height="6.4" fill="url(#kH)"/><rect transform="translate(378.8 281.8) rotate(0)" x="0" y="-3.2" width="14.7" height="6.4" fill="url(#kC)"/><rect transform="translate(392.9 281.8) rotate(0)" x="0" y="-3.2" width="14.1" height="6.4" fill="url(#kH)"/><rect transform="translate(373.2 371.4) rotate(-64.8)" x="0" y="-6.5" width="33.4" height="13" fill="url(#kR)"/><rect transform="translate(359.5 400.6) rotate(-64.8)" x="0" y="-6.5" width="32.8" height="13" fill="url(#kS)"/><rect transform="translate(560.4 239) rotate(-44)" x="0" y="-6.2" width="52.7" height="12.4" fill="url(#kC)"/><rect transform="translate(572.1 312.5) rotate(-70.1)" x="0" y="-3.2" width="10.3" height="6.4" fill="url(#kC)"/><rect transform="translate(569 321) rotate(-70.1)" x="0" y="-3.2" width="9.7" height="6.4" fill="url(#kH)"/><rect transform="translate(221.4 675.5) rotate(-76.5)" x="0" y="-3.2" width="18.1" height="6.4" fill="url(#kC)"/><rect transform="translate(217.4 692) rotate(-76.5)" x="0" y="-3.2" width="17.5" height="6.4" fill="url(#kH)"/><rect transform="translate(743.3 709.3) rotate(-87.7)" x="0" y="-3.2" width="17.9" height="6.4" fill="url(#kC)"/><rect transform="translate(742.6 726) rotate(-87.7)" x="0" y="-3.2" width="17.3" height="6.4" fill="url(#kH)"/><circle cx="489" cy="215.9" r="4.5" fill="url(#sH)"/><circle cx="407" cy="281.8" r="4.5" fill="url(#sH)"/><circle cx="359.5" cy="400.6" r="13" fill="url(#sS)"/><circle cx="359.5" cy="400.6" r="13" fill="url(#rim)"/><circle cx="569" cy="321" r="4.5" fill="url(#sH)"/><circle cx="217.4" cy="692" r="4.5" fill="url(#sH)"/><circle cx="742.6" cy="726" r="4.5" fill="url(#sH)"/><rect transform="translate(589.7 196.6) rotate(33.8)" x="0" y="-5.6" width="10.4" height="11.3" fill="url(#kC)"/><rect transform="translate(582 191.5) rotate(33.8)" x="0" y="-5.6" width="9.8" height="11.3" fill="url(#kP)"/><rect transform="translate(724 210) rotate(-27.9)" x="0" y="-6.2" width="20.9" height="12.4" fill="url(#kC)"/><rect transform="translate(742 200.5) rotate(-27.9)" x="0" y="-6.2" width="20.3" height="12.4" fill="url(#kP)"/><circle cx="582" cy="191.5" r="13.5" fill="url(#sP)"/><circle cx="582" cy="191.5" r="13.5" fill="url(#rim)"/><circle cx="759.9" cy="191" r="14.2" fill="url(#sP)"/><circle cx="759.9" cy="191" r="14.2" fill="url(#rim)"/><text x="439.5" y="378" font-family="Liberation Sans" font-size="43" fill="#ff0a0a" stroke="#000" stroke-width="0.9" textLength="57.5" lengthAdjust="spacingAndGlyphs">3AI</text><text x="85.5" y="710" font-family="Liberation Sans" font-size="43" fill="#f47c9a" stroke="#000" stroke-width="0.5" textLength="70" lengthAdjust="spacingAndGlyphs">3A3</text></svg></div>
</body></html>
